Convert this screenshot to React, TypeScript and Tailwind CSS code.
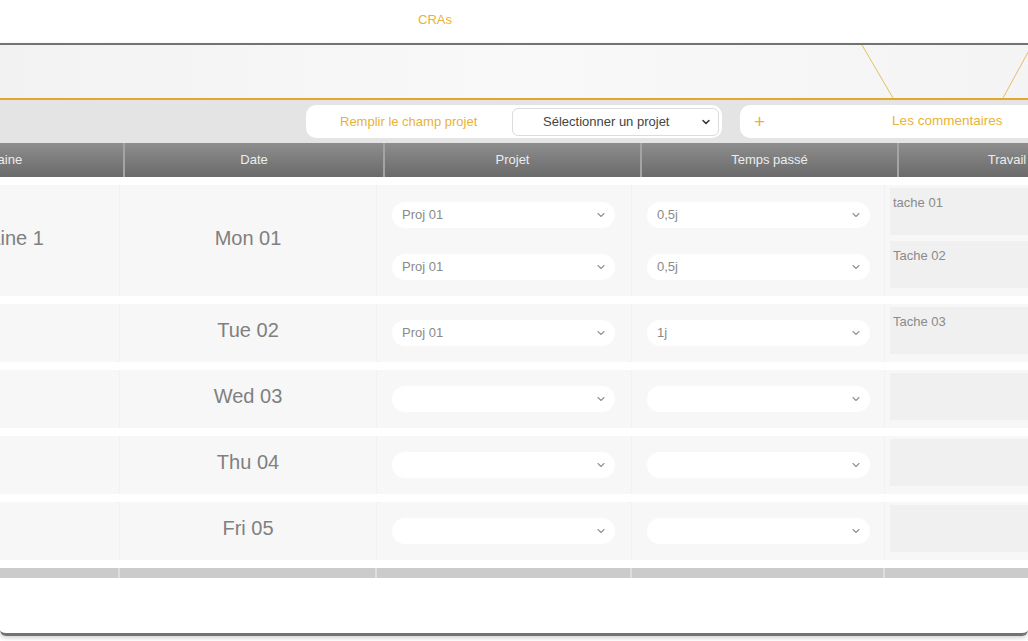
import { ChevronDown } from 'lucide-react';

const days = [
  { week: 'Semaine 1', date: 'Mon 01', entries: [{ projet: 'Proj 01', temps: '0,5j', travail: 'tache 01' }, { projet: 'Proj 01', temps: '0,5j', travail: 'Tache 02' }] },
  { week: '', date: 'Tue 02', entries: [{ projet: 'Proj 01', temps: '1j', travail: 'Tache 03' }] },
  { week: '', date: 'Wed 03', entries: [{ projet: '', temps: '', travail: '' }] },
  { week: '', date: 'Thu 04', entries: [{ projet: '', temps: '', travail: '' }] },
  { week: '', date: 'Fri 05', entries: [{ projet: '', temps: '', travail: '' }] },
];

const headers = ['Semaine', 'Date', 'Projet', 'Temps passé', 'Travail'];

function RoundSelect({ value }: { value: string }) {
  return (
    <div className="w-[223px] h-[26px] rounded-full bg-white flex items-center pl-[10px] pr-[8px] text-[13px] text-[#8a8a8a]">
      <span className="flex-1">{value}</span>
      <ChevronDown className="w-[12px] h-[12px] text-[#929292]" strokeWidth={2.2} />
    </div>
  );
}

export default function App() {
  return (
    <div className="w-[1028px] h-[641px] bg-white overflow-hidden font-['Liberation_Sans',Arial,sans-serif]">
      <nav className="h-[43px] flex items-center pl-[418px] pb-[3px]">
        <span className="text-[13px] text-[#e9b236]">CRAs</span>
      </nav>

      <div className="h-[593px] border-t-2 border-b-[3px] border-[#737373] rounded-b-[6px] overflow-hidden shadow-[0_2px_4px_rgba(0,0,0,0.18)]">
        {/* banner */}
        <div className="relative h-[53px] bg-gradient-to-r from-[#f2f2f2] via-[#f9f9f9] to-[#f4f4f4]">
          <svg className="absolute inset-0" width="1028" height="53">
            <line x1="862" y1="0" x2="893" y2="53" stroke="#e6bd68" strokeWidth="1" />
            <line x1="1032" y1="0" x2="1003" y2="53" stroke="#e6bd68" strokeWidth="1" />
          </svg>
        </div>
        <div className="h-[2px] bg-[#e3a82a]" />

        {/* toolbar */}
        <div className="h-[43px] bg-[#e4e4e4] flex items-center">
          <div className="ml-[306px] w-[416px] h-[33px] shrink-0 rounded-[10px] bg-white flex items-center pl-[34px] pr-[3px]">
            <span className="text-[13px] text-[#e9b236]">Remplir le champ projet</span>
            <div className="ml-auto w-[207px] h-[28px] border border-[#dcdcdc] rounded-[6px] flex items-center pl-[30px] pr-[6px] text-[13px] text-[#444]">
              <span className="flex-1">Sélectionner un projet</span>
              <ChevronDown className="w-[12px] h-[12px] text-[#333]" strokeWidth={3} />
            </div>
          </div>
          <div className="ml-[18px] w-[416px] h-[33px] shrink-0 rounded-[10px] bg-white flex items-center pl-[14px]">
            <span className="text-[19px] leading-none text-[#e9b236]">+</span>
            <span className="ml-[127px] text-[13.5px] text-[#e9b236]">Les commentaires</span>
          </div>
        </div>

        {/* table */}
        <div className="overflow-hidden">
          <div className="ml-[-134px] w-[1400px] grid grid-cols-[259px_260px_257px_257px_218px] h-[34px] bg-gradient-to-b from-[#8e8e8e] to-[#6a6a6a]">
            {headers.map((h, i) => (
              <div key={h} className={`flex items-center justify-center border-r-2 border-[#a4a4a4] text-[13px] text-[#ededed] ${i === 0 ? 'pl-[4px]' : ''}`}>
                {h}
              </div>
            ))}
          </div>

          <div className="ml-[-135px] w-[1400px] flex flex-col gap-2 pt-2">
            {days.map(day => (
              <div key={day.date} className="grid grid-cols-[255px_257px_255px_253px_260px] bg-[#f7f7f7]" style={{ height: day.entries.length > 1 ? 111 : 58 }}>
                <div className="flex items-center justify-center border-r border-[#f1f1f1] text-[20px] text-[#808080] pb-[6px] pl-[8px]">
                  {day.week}
                </div>
                <div className="flex items-center justify-center border-r border-[#f1f1f1] text-[20px] text-[#808080] pb-[6px]">
                  {day.date}
                </div>
                <div className="flex flex-col justify-center gap-[26px] pl-[15px] border-r border-[#f1f1f1]">
                  {day.entries.map((e, i) => (
                    <RoundSelect key={i} value={e.projet} />
                  ))}
                </div>
                <div className="flex flex-col justify-center gap-[26px] pl-[15px] border-r border-[#f1f1f1]">
                  {day.entries.map((e, i) => (
                    <RoundSelect key={i} value={e.temps} />
                  ))}
                </div>
                <div className="flex flex-col gap-[6px] pl-[5px] pt-[3px]">
                  {day.entries.map((e, i) => (
                    <div key={i} className="h-[47px] bg-[#f0f0f0] pl-[3px] pt-[7px] text-[13px] leading-[15px] text-[#8a8a8a]">
                      {e.travail}
                    </div>
                  ))}
                </div>
              </div>
            ))}

            <div className="grid grid-cols-[255px_257px_255px_253px_260px] h-[10px] bg-[#cbcbcb]">
              <div className="border-r-2 border-[#dedede]" />
              <div className="border-r-2 border-[#dedede]" />
              <div className="border-r-2 border-[#dedede]" />
              <div className="border-r-2 border-[#dedede]" />
              <div />
            </div>
          </div>
        </div>
      </div>
    </div>
  );
}
